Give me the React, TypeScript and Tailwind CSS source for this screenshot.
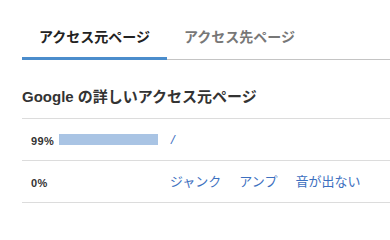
import React from "react";

const font = { fontFamily: '"Liberation Sans", "Noto Sans CJK JP", sans-serif' };

const rows = [
  { pct: "99%", bar: 99, links: ["/"] },
  { pct: "0%", bar: 0, links: ["ジャンク", "アンプ", "音が出ない"] },
];

export default function App() {
  return (
    <div className="w-[390px] h-[217px] bg-white overflow-hidden" style={font}>
      {/* tabs */}
      <div className="ml-[22px] pt-[27px] flex border-b border-[#c4c4c4]">
        <div className="px-[17px] pb-[10px] -mb-px border-b-[3px] border-[#4b8dcc] text-[14px] leading-[20px] font-bold text-[#222]">
          アクセス元ページ
        </div>
        <div className="px-[17px] pb-[10px] text-[14px] leading-[20px] font-bold text-[#777]">
          アクセス先ページ
        </div>
      </div>

      <div className="ml-[22px]">
        <div className="pt-[27px] pb-[11px] border-b border-[#dcdcdc] text-[15px] leading-[20px] font-bold text-[#333]">
          Google の詳しいアクセス元ページ
        </div>

        {rows.map((r) => (
          <div key={r.pct} className="h-[42px] flex items-center border-b border-[#dcdcdc]">
            <div className="w-[148px] pl-[9px] flex items-center gap-[5px]">
              <span className="text-[11px] font-bold tracking-[0.04em] text-[#333] pt-[3px]">{r.pct}</span>
              {r.bar > 0 && <div className="h-[11px] bg-[#a9c4e4]" style={{ width: r.bar }} />}
            </div>
            <div className="flex gap-[18px] text-[13px] text-[#3d70c0]">
              {r.links.map((l) => (
                <a key={l} href="#" className={l === "/" ? "italic pl-px" : ""}>
                  {l}
                </a>
              ))}
            </div>
          </div>
        ))}
      </div>
    </div>
  );
}
